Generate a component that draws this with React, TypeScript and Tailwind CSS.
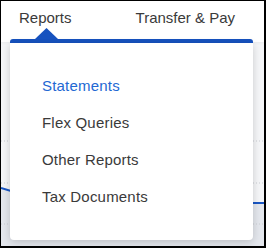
import React from "react";

const items = [
  { label: "Statements", active: true },
  { label: "Flex Queries" },
  { label: "Other Reports" },
  { label: "Tax Documents" },
];

const App = () => {
  return (
    <div className="relative w-[266px] h-[248px] overflow-hidden border-black border-t border-l border-r-2 border-b-2 bg-[#f5f6f8] font-['Liberation_Sans',Arial,sans-serif]">
      {/* top nav */}
      <div className="relative z-10 h-[41px] bg-white flex items-start pt-[8px] text-[15px] leading-[17px] text-[#3a3a3a] shadow-[0_1px_3px_rgba(0,0,0,0.05)]">
        <span className="ml-[18px]">Reports</span>
        <span className="ml-[64px]">Transfer &amp; Pay</span>
      </div>

      {/* chart behind */}
      <svg width="264" height="204" className="block">
        <polygon points="0,146 10,149 60,156 140,160 240,161 264,161 264,204 0,204" fill="#e4e7ed" />
        <line x1="0" y1="99" x2="264" y2="99" stroke="#c9ccd2" strokeDasharray="1 2" />
        <line x1="0" y1="141" x2="264" y2="141" stroke="#c9ccd2" strokeDasharray="1 2" />
        <line x1="0" y1="182" x2="264" y2="182" stroke="#c9ccd2" strokeDasharray="1 2" />
        <polyline points="0,146 10,149 60,156 140,160 240,161 264,161" fill="none" stroke="#1a57c4" strokeWidth="2" />
      </svg>

      {/* dropdown */}
      <div className="absolute left-[9px] top-[27px] z-20 w-[243px]">
        <svg width="23" height="11" className="block ml-[25px]">
          <polygon points="0,11 11.5,0 23,11" fill="#1652bf" />
        </svg>
        <div className="h-[4px] bg-[#1652bf] rounded-t-[3px]" />
        <div className="bg-white rounded-b-[4px] shadow-[0_2px_8px_rgba(0,0,0,0.18)] pt-[24px] pb-[25px] pl-[32px]">
          {items.map((it) => (
            <div
              key={it.label}
              className={
                it.active
                  ? "h-[37px] leading-[37px] text-[15px] tracking-[0.2px] text-[#2368d3]"
                  : "h-[37px] leading-[37px] text-[15px] tracking-[0.2px] text-[#3a3a3a]"
              }
            >
              {it.label}
            </div>
          ))}
        </div>
      </div>
    </div>
  );
};

export default App;
